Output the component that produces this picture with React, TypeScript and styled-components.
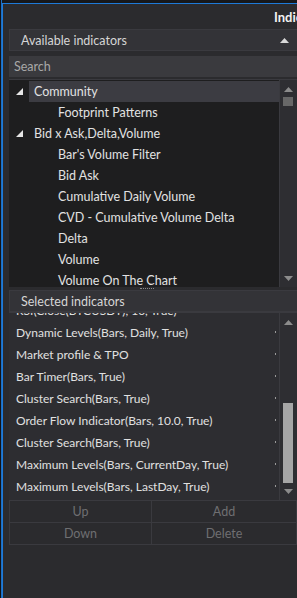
import React from "react";
import styled, { createGlobalStyle } from "styled-components";

const GlobalStyle = createGlobalStyle`
  html, body {
    margin: 0;
    padding: 0;
    background: #17181b;
    overflow: hidden;
  }
  * {
    box-sizing: border-box;
  }
`;

const Screen = styled.div`
  width: 297px;
  height: 598px;
  display: flex;
  overflow: hidden;
  font-family: Lato, "Open Sans", sans-serif;
`;

const ChartEdge = styled.div`
  width: 2px;
  flex: none;
  background: #131316;
  border-right: 1px solid #1c6fc4;
`;

const Window = styled.div`
  flex: 1;
  margin-top: 3px;
  border-top: 1px solid #1e7ad8;
  border-left: 1px solid #1e7ad8;
  background: #2b2b2e;
  display: flex;
  flex-direction: column;
  min-width: 0;
`;

const TitleBar = styled.div`
  height: 25px;
  flex: none;
  padding-left: 271px;
  display: flex;
  align-items: center;
  overflow: hidden;
  white-space: nowrap;
  color: #f2f2f2;
  font-weight: 700;
  font-size: 13px;
`;

const Body = styled.div`
  flex: 1;
  padding-left: 6px;
  display: flex;
  flex-direction: column;
`;

const SectionHeader = styled.div`
  height: 22px;
  flex: none;
  display: flex;
  align-items: center;
  justify-content: space-between;
  padding: 0 8px 0 11px;
  background: #333337;
  border: 1px solid #3a3a3f;
  border-right: none;
  color: #d6d6d6;
  font-size: 12.5px;
`;

const SearchBox = styled.div`
  height: 21px;
  flex: none;
  margin-top: 5px;
  display: flex;
  align-items: center;
  padding-left: 5px;
  background: #3a3a3e;
  color: #a8a8a8;
  font-size: 12.5px;
`;

const Pane = styled.div<{ $height: number; $bg: string; $gap?: number }>`
  height: ${(p) => p.$height}px;
  flex: none;
  display: flex;
  margin-top: ${(p) => p.$gap ?? 0}px;
  background: ${(p) => p.$bg};
  border-top: 1px solid #3a3a3f;
  overflow: hidden;
`;

const Rows = styled.div<{ $offset: number }>`
  flex: 1;
  min-width: 0;
  display: flex;
  flex-direction: column;
  margin-top: ${(p) => p.$offset}px;
`;

const TreeRow = styled.div<{ $level: number }>`
  height: 21px;
  flex: none;
  display: flex;
  align-items: center;
  color: #e2e2e2;
  font-size: 12.5px;
  white-space: nowrap;
  padding-left: ${(p) => (p.$level === 0 ? 7 : 44)}px;
`;

const Expander = styled.span`
  width: 13px;
  height: 21px;
  display: flex;
  align-items: center;
  flex: none;
`;

const Label = styled.span<{ $selected?: boolean }>`
  height: 100%;
  display: flex;
  align-items: center;
  flex: 1;
  padding-left: ${(p) => (p.$selected ? 5 : 0)}px;
  margin-left: ${(p) => (p.$selected ? 0 : 5)}px;
  background: ${(p) => (p.$selected ? "#3c3c42" : "transparent")};
`;

const ListRow = styled.div`
  height: 22px;
  flex: none;
  display: flex;
  align-items: center;
  justify-content: space-between;
  padding: 0 3px 0 7px;
  color: #e0e0e0;
  font-size: 12px;
  white-space: nowrap;
`;

const Tick = styled.span`
  width: 1px;
  height: 2px;
  background: #9a9a9a;
`;

const ScrollBar = styled.div`
  width: 18px;
  flex: none;
  display: flex;
  flex-direction: column;
  align-items: center;
  padding: 7px 0 6px 0;
  background: #2e2e32;
  border-left: 1px solid #3a3a3f;
`;

const Track = styled.div`
  flex: 1;
  width: 100%;
  position: relative;
`;

const Thumb = styled.div<{ $top: number; $height: number; $color: string }>`
  position: absolute;
  left: 3px;
  width: 10px;
  top: ${(p) => p.$top}px;
  height: ${(p) => p.$height}px;
  background: ${(p) => p.$color};
`;

const Splitter = styled.div`
  height: 3px;
  flex: none;
  display: flex;
  justify-content: center;
  align-items: center;
  padding-right: 12px;
`;

const Grip = styled.div`
  width: 14px;
  height: 1px;
  border-top: 1px dotted #8a8a8a;
`;

const ButtonGrid = styled.div`
  display: grid;
  grid-template-columns: 142px 1fr;
  border-top: 1px solid #3a3a3f;
  border-left: 1px solid #3a3a3f;
  flex: none;
`;

const GridButton = styled.div`
  height: 22px;
  display: flex;
  align-items: center;
  justify-content: center;
  color: #6f6f72;
  font-size: 12.5px;
  border-right: 1px solid #3a3a3f;
  border-bottom: 1px solid #3a3a3f;
  background: #2b2b2e;
`;

function ArrowUp() {
  return (
    <svg width="9" height="5" viewBox="0 0 9 5">
      <polygon points="4.5,0 9,5 0,5" fill="#d8d8d8" />
    </svg>
  );
}

function ScrollArrow({ down }: { down?: boolean }) {
  return (
    <svg width="9" height="5" viewBox="0 0 9 5">
      <polygon
        points={down ? "0,0 9,0 4.5,5" : "4.5,0 9,5 0,5"}
        fill="#8c8c8c"
      />
    </svg>
  );
}

function Corner() {
  return (
    <svg width="7" height="7" viewBox="0 0 7 7">
      <polygon points="7,0 7,7 0,7" fill="#e6e6e6" />
    </svg>
  );
}

const tree = [
  { text: "Community", level: 0, selected: true },
  { text: "Footprint Patterns", level: 1 },
  { text: "Bid x Ask,Delta,Volume", level: 0 },
  { text: "Bar's Volume Filter", level: 1 },
  { text: "Bid Ask", level: 1 },
  { text: "Cumulative Daily Volume", level: 1 },
  { text: "CVD - Cumulative Volume Delta", level: 1 },
  { text: "Delta", level: 1 },
  { text: "Volume", level: 1 },
  { text: "Volume On The Chart", level: 1 },
];

const selected = [
  "RSI(Close(BTCUSDT), 10, True)",
  "Dynamic Levels(Bars, Daily, True)",
  "Market profile & TPO",
  "Bar Timer(Bars, True)",
  "Cluster Search(Bars, True)",
  "Order Flow Indicator(Bars, 10.0, True)",
  "Cluster Search(Bars, True)",
  "Maximum Levels(Bars, CurrentDay, True)",
  "Maximum Levels(Bars, LastDay, True)",
];

export default function App() {
  return (
    <Screen>
      <GlobalStyle />
      <ChartEdge />
      <Window>
        <TitleBar>Indicators</TitleBar>
        <Body>
          <SectionHeader>
            Available indicators
            <ArrowUp />
          </SectionHeader>
          <SearchBox>Search</SearchBox>
          <Pane $height={208} $bg="#1e1e1f" $gap={2}>
            <Rows $offset={1}>
              {tree.map((row) => (
                <TreeRow key={row.text} $level={row.level}>
                  {row.level === 0 && (
                    <Expander>
                      <Corner />
                    </Expander>
                  )}
                  <Label $selected={row.selected}>{row.text}</Label>
                </TreeRow>
              ))}
            </Rows>
            <ScrollBar>
              <ScrollArrow />
              <Track>
                <Thumb $top={5} $height={9} $color="#686868" />
              </Track>
              <ScrollArrow down />
            </ScrollBar>
          </Pane>
          <Splitter>
            <Grip />
          </Splitter>
          <SectionHeader>Selected indicators</SectionHeader>
          <Pane $height={188} $bg="#2d2d31">
            <Rows $offset={-14}>
              {selected.map((text, i) => (
                <ListRow key={i}>
                  {text}
                  <Tick />
                </ListRow>
              ))}
            </Rows>
            <ScrollBar>
              <ScrollArrow />
              <Track>
                <Thumb $top={78} $height={80} $color="#a6a6a6" />
              </Track>
              <ScrollArrow down />
            </ScrollBar>
          </Pane>
          <ButtonGrid>
            <GridButton>Up</GridButton>
            <GridButton>Add</GridButton>
            <GridButton>Down</GridButton>
            <GridButton>Delete</GridButton>
          </ButtonGrid>
        </Body>
      </Window>
    </Screen>
  );
}
